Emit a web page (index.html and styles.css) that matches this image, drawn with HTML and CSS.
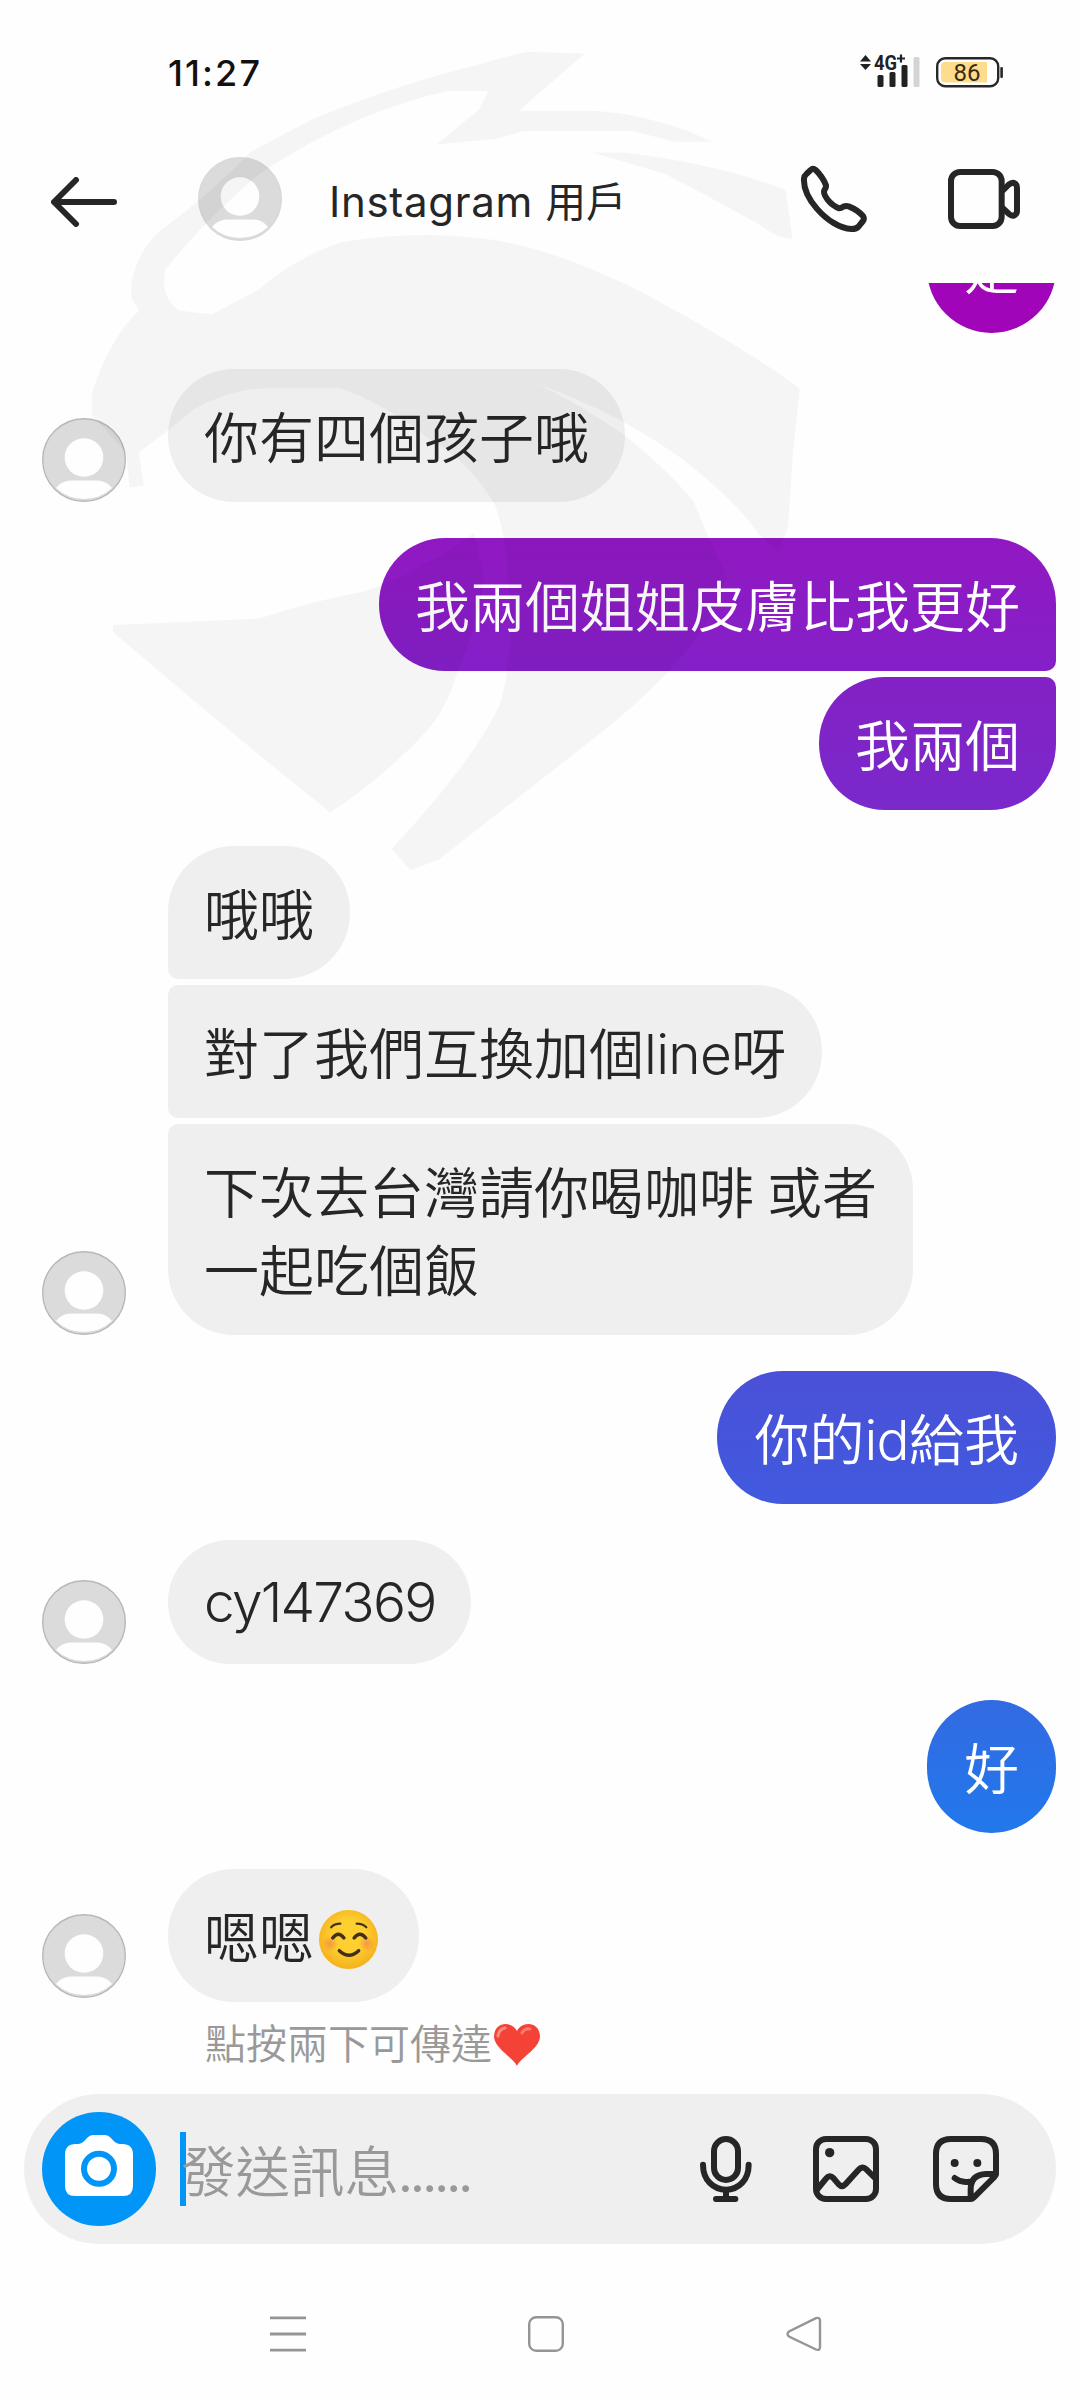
FILE: index.html
```html
<!DOCTYPE html>
<html lang="zh-Hant">
<head>
<meta charset="utf-8">
<title>Instagram 用戶</title>
<link rel="stylesheet" href="styles.css">
</head>
<body>
<svg class="defs" aria-hidden="true">
  <symbol id="avatar" viewBox="0 0 84 84">
    <circle cx="42" cy="42" r="41.5" fill="#dbdbdb"/>
    <circle cx="42" cy="39.5" r="19.3" fill="#fefefe"/>
    <path d="M14 70 Q20 62.500 29 62.500 H55 Q64 62.500 70 70 A41 41 0 0 1 14 70Z" fill="#fefefe"/>
    <circle cx="42" cy="42" r="41.3" fill="none" stroke="currentColor" stroke-width="1.400"/>
  </symbol>
</svg>
<div class="screen">
  <div class="status">
    <span class="time">11:27</span>
    <div class="indicators">
      <svg class="signal" viewBox="0 -6 62 40">
        <path d="M0 7.500 L5.500 1 L11 7.500Z M0 10 H11 L5.500 16Z" fill="#222"/>
        <text x="14" y="16" textLength="23" lengthAdjust="spacingAndGlyphs" class="net">4G</text>
        <path d="M37 4.500 H45 M41 .5 V8.500" stroke="#222" stroke-width="2.200"/>
        <rect x="17.500" y="21" width="6" height="12" rx="1.500" fill="#222"/>
        <rect x="29.500" y="18" width="6" height="15" rx="1.500" fill="#222"/>
        <rect x="41.500" y="11" width="6" height="22" rx="1.500" fill="#222"/>
        <rect x="53.500" y="3" width="6" height="30" rx="1.500" fill="#d4d4d4"/>
      </svg>
      <svg class="battery" viewBox="0 0 68 31">
        <rect x="1.200" y="1.200" width="61" height="28" rx="8" fill="#fff" stroke="#27272c" stroke-width="2.400"/>
        <path d="M9 5 H51 V25.500 H9 Q5 25.500 5 21.500 V9 Q5 5 9 5Z" fill="#fddc8b"/>
        <rect x="64.300" y="10" width="2.600" height="11" rx="1" fill="#27272c"/>
        <text x="17.500" y="24" textLength="27" lengthAdjust="spacingAndGlyphs" class="pct">86</text>
      </svg>
    </div>
  </div>

  <header class="header">
    <svg class="back" viewBox="0 0 66 50" fill="none" stroke="#262626" stroke-width="6" stroke-linecap="round" stroke-linejoin="round"><path d="M25 3 L3 25 L25 47 M4 25 H63"/></svg>
    <svg class="avatar avatar-top"><use href="#avatar"/></svg>
    <h1 class="title">Instagram <span class="title-cjk">用戶</span></h1>
    <svg class="phone" viewBox="60 75 204 204" fill="none" stroke="#262626" stroke-width="18" stroke-linejoin="round"><path d="M92 90 Q99 83 107 90 Q128 110 138 136 Q139 142 133 151 Q129 160 142 178 Q158 198 178 205 Q183 205 190 200 Q198 197 206 199 Q232 209 249 228 Q254 235 249 243 L236 259 Q230 267 214 267 C180 266 140 240 110 205 C85 176 70 145 72 115 Q73 107 80 101Z"/></svg>
    <svg class="video" viewBox="504 86 216 180" fill="none" stroke="#262626" stroke-width="18"><rect x="513" y="95" width="152" height="162" rx="27"/><path d="M667 152 L686 133 Q697 124 706 130 Q711 134 711 142 V212 Q711 221 703 225 Q695 228 687 221 L667 202"/></svg>
  </header>

  <main class="thread">
    <div class="sent"><p class="bubble out o1">是</p></div>
    <div class="received">
      <svg class="avatar"><use href="#avatar"/></svg>
      <div class="stack"><p class="bubble">你有四個孩子哦</p></div>
    </div>
    <div class="sent">
      <p class="bubble out o2 joins-below">我兩個姐姐皮膚比我更好</p>
      <p class="bubble out o3 joins-above">我兩個</p>
    </div>
    <div class="received">
      <svg class="avatar"><use href="#avatar"/></svg>
      <div class="stack">
        <p class="bubble joins-below">哦哦</p>
        <p class="bubble joins-below joins-above">對了我們互換加個<span class="latin">line</span>呀</p>
        <p class="bubble joins-above">下次去台灣請你喝咖啡<span class="gap"> </span>或者<br>一起吃個飯</p>
      </div>
    </div>
    <div class="sent"><p class="bubble out o4">你的<span class="latin">id</span>給我</p></div>
    <div class="received">
      <svg class="avatar"><use href="#avatar"/></svg>
      <div class="stack"><p class="bubble latin latin-only">cy147369</p></div>
    </div>
    <div class="sent"><p class="bubble out o5">好</p></div>
    <div class="received last">
      <svg class="avatar"><use href="#avatar"/></svg>
      <div class="stack">
        <p class="bubble with-emoji">嗯嗯<svg class="smile" viewBox="0 0 58 58">
          <defs>
            <radialGradient id="face" cx=".5" cy=".45" r=".55"><stop offset=".5" stop-color="#fdd030"/><stop offset="1" stop-color="#f5b01c"/></radialGradient>
            <radialGradient id="blush"><stop offset="0" stop-color="#f28a4a" stop-opacity=".8"/><stop offset="1" stop-color="#f28a4a" stop-opacity="0"/></radialGradient>
          </defs>
          <circle cx="29" cy="29" r="29" fill="url(#face)"/>
          <circle cx="11" cy="33" r="8" fill="url(#blush)"/><circle cx="47" cy="33" r="8" fill="url(#blush)"/>
          <g fill="none" stroke="#43301c" stroke-linecap="round">
            <path d="M12 17 Q15 13.500 21 13.500 M37 13.500 Q43 13.500 46.500 17" stroke-width="2.200"/>
            <path d="M13.500 27.500 Q19 20 24.500 27.500 M34.500 27.500 Q40 20 46 27.500" stroke-width="3.400"/>
            <path d="M20 40 Q29.500 49 39 40" stroke-width="3.400"/>
          </g></svg></p>
      </div>
    </div>
    <p class="hint">點按兩下可傳達<svg class="heart" viewBox="0 0 46 42"><path d="M23 42 C20 34 1 25 0 13 C0 5 5 0 11.500 0 C17 0 21 3 23 7 C25 3 29 0 34.500 0 C41 0 46 5 46 13 C45 25 26 34 23 42Z" fill="#f44336"/><path d="M4 12 Q5 5 11 4" fill="none" stroke="#ff8a80" stroke-width="3" stroke-linecap="round"/><path d="M28 9 Q31 4 36 5" fill="none" stroke="#ff7a70" stroke-width="3" stroke-linecap="round"/></svg></p>
  </main>

  <footer class="composer">
    <svg class="camera" viewBox="126 96 342 342">
      <circle cx="297" cy="267" r="171" fill="#0095f6"/>
      <path d="M227 192 H236 Q246 191 252 184 L262 173 Q269 165 279 165 H315 Q325 165 332 173 L342 184 Q348 191 358 192 H367 Q399 192 399 224 V318 Q399 348 369 348 H225 Q195 348 195 318 V224 Q195 192 227 192Z" fill="#fff"/>
      <circle cx="297" cy="266" r="45" fill="#fff" stroke="#0095f6" stroke-width="18"/>
    </svg>
    <div class="field"><span class="caret"></span><span class="placeholder">發送訊息<span class="dots">......</span></span></div>
    <div class="tools">
      <svg class="mic" viewBox="150 168 156 198" fill="none" stroke="#262626" stroke-width="18" stroke-linecap="round"><rect x="192" y="177" width="72" height="123" rx="36"/><path d="M159 254 C159 300 190 329 228 329 S296 300 296 254 M228 331 V355 M198 357 H256"/></svg>
      <svg class="tool" viewBox="489 168 198 198" fill="none" stroke="#262626" stroke-width="18"><rect x="498" y="177" width="180" height="180" rx="30"/><circle cx="539" cy="218" r="14" fill="#262626" stroke="none"/><path d="M500 330 L528 296 Q539 282 550 294 L566 313 Q576 323 586 313 L625 270 Q637 256 649 268 L680 299"/></svg>
      <svg class="tool" viewBox="849 168 198 198" fill="none" stroke="#262626" stroke-width="18" stroke-linecap="round" stroke-linejoin="round"><path d="M1038 282 V222 Q1038 177 993 177 H903 Q858 177 858 222 V312 Q858 357 903 357 H962 Q967 357 971 353 L1034 290 Q1038 286 1038 282 H1008 Q962 284 962 328 V354"/><path d="M914 294 Q933 309 957 305"/><circle cx="914" cy="249" r="12" fill="#262626" stroke="none"/><circle cx="982" cy="249" r="12" fill="#262626" stroke="none"/></svg>
    </div>
  </footer>

  <nav class="nav">
    <svg viewBox="0 0 36 36" fill="none" stroke="#959595" stroke-width="2.800"><path d="M0 1.800 H36 M0 18 H36 M0 34.200 H36"/></svg>
    <svg viewBox="0 0 36 36" fill="none" stroke="#959595" stroke-width="2.400"><rect x="1.200" y="1.200" width="33.600" height="33.600" rx="7"/></svg>
    <svg viewBox="0 0 36 36" fill="none" stroke="#959595" stroke-width="2.400"><path d="M30 2.200 L3 15.500 Q0 18 3 20.500 L30 33.500 Q34 35 34 31 V5 Q34 1 30 2.200Z"/></svg>
  </nav>

  <svg class="watermark" viewBox="0 0 1568 1568" preserveAspectRatio="none" aria-hidden="true">
    <path d="M1070 25 L950 22 Q900 30 850 45 Q700 75 500 145 Q430 175 360 210 Q260 300 170 355 Q105 410 108 480 L125 505 Q60 560 25 660 V700 L97 770 L105 835 L135 832 L125 770 Q200 720 240 690 Q320 650 400 650 H550 Q650 680 740 745 Q830 790 880 870 Q905 930 905 1000 Q925 1130 890 1240 Q830 1350 660 1510 L700 1550 L760 1530 Q950 1400 1130 1275 Q1230 1200 1260 1165 Q1340 1090 1370 1000 Q1330 930 1300 860 Q1230 790 1150 735 Q1060 680 970 642 Q1150 700 1280 785 Q1390 860 1440 925 L1480 955 L1500 910 L1510 780 L1525 650 Q1400 570 1200 475 Q1000 385 850 370 Q700 355 550 378 Q450 410 380 465 L280 512 L210 505 Q170 480 180 430 Q260 340 380 250 Q480 190 600 145 Q700 110 780 95 H865 L845 130 L755 195 L880 185 L940 170 H1170 L1260 190 H1337 L1290 170 Q1160 130 1060 132 H930Z"/>
    <path d="M1085 210 H1150 Q1350 230 1495 280 L1510 372 Q1480 372 1440 345 Q1350 300 1240 250Z"/>
    <path d="M70 1105 V1092 L380 1080 Q500 1045 600 1030 Q720 995 835 920 L855 1000 Q855 1060 800 1180 Q780 1240 740 1285 Q640 1380 530 1442 Q300 1280 70 1105Z"/>
  </svg>
</div>
</body>
</html>
```
FILE: styles.css
```css
* { box-sizing: border-box; }
body { margin: 0; background: #fefefe; }
p, h1 { margin: 0; }
svg { display: block; flex: none; }
.defs { position: absolute; width: 0; height: 0; }

.screen {
  position: relative;
  display: flex;
  flex-direction: column;
  width: 1080px;
  height: 2400px;
  overflow: hidden;
  background: #fefefe;
  color: #262626;
  font-family: Lato, "Noto Sans CJK TC", sans-serif;
}

/* status bar */
.status {
  display: flex;
  justify-content: space-between;
  height: 120px;
  padding: 54px 76px 0 168px;
}
.time {
  font: 500 36px/38px Inter, sans-serif;
  color: #111;
  letter-spacing: 2.1px;
}
.indicators { display: flex; gap: 14px; }
.signal { width: 62px; height: 40px; margin-top: -6px; }
.battery { width: 68px; height: 31px; margin-top: 3px; }
.net { font: 700 20px Roboto, sans-serif; fill: #222; }
.pct { font: 400 24px Roboto, sans-serif; fill: #3a2a12; }

/* conversation header */
.header {
  display: flex;
  align-items: center;
  height: 163px;
  padding: 0 60px 6px 51px;
}
.back { width: 66px; height: 50px; margin-top: 6px; }
.avatar { width: 84px; height: 84px; color: #b8b8b8; }
.avatar-top { margin-left: 81px; color: #d8d8d8; }
.title {
  flex: 1;
  margin: 7px 0 0 47px;
  font-family: Inter, "Noto Sans CJK TC", sans-serif;
  font-size: 42px;
  font-weight: 400;
  line-height: 60px;
  letter-spacing: .7px;
  white-space: nowrap;
}
.title-cjk { font-size: 40.5px; letter-spacing: 0; }
.phone { width: 68px; height: 68px; }
.video { width: 72px; height: 60px; margin-left: 80px; }

/* messages */
.thread {
  display: flex;
  flex-direction: column;
  gap: 36px;
  height: 1811px;
  overflow: hidden;
  padding-right: 24px;
}
.thread > :first-child { margin-top: -83px; }
.sent { display: flex; flex-direction: column; align-items: flex-end; gap: 6px; }
.received { display: flex; align-items: flex-end; gap: 42px; padding-left: 42px; }
.last .avatar { margin-bottom: 4px; }
.stack { display: flex; flex-direction: column; align-items: flex-start; gap: 6px; }
.bubble {
  padding: 29px 36px 26px;
  border-radius: 66px;
  background: #efefef;
  font-size: 55px;
  font-weight: 350;
  line-height: 78px;
  white-space: nowrap;
}
.stack .joins-below { border-bottom-left-radius: 10px; }
.stack .joins-above { border-top-left-radius: 10px; }
.sent .joins-below { border-bottom-right-radius: 10px; }
.sent .joins-above { border-top-right-radius: 10px; }
.out { padding-inline: 37px; color: #fff; }
.o1 { background: #a005b9; }
.o2 { padding-inline: 36px; background: linear-gradient(#9118c2, #8420c8); }
.o3 { padding-inline: 36px; background: linear-gradient(#8321c5, #7a29cb); }
.o4 { background: linear-gradient(#4b50d7, #405adf); }
.o5 { background: linear-gradient(#336ae2, #2178ec); }
.latin { font-family: Inter, sans-serif; font-weight: 300; line-height: 1; letter-spacing: -.7px; }
.latin-only { padding-block: 27px; line-height: 70px; letter-spacing: -1.8px; }
.gap { letter-spacing: -2px; }
.with-emoji { display: flex; padding-right: 41px; }
.smile { width: 59px; height: 59px; margin: 12px 0 0 5px; }
.hint {
  display: flex;
  margin-top: -24px;
  padding-left: 205px;
  font-size: 41px;
  font-weight: 350;
  line-height: 60px;
  color: #999;
}
.heart { width: 46px; height: 42px; margin: 10px 0 0 2px; }

/* composer */
.composer {
  display: flex;
  align-items: center;
  height: 150px;
  margin: 0 24px;
  padding: 0 57px 0 18px;
  border-radius: 75px;
  background: #efefef;
}
.camera { width: 114px; height: 114px; }
.field { display: flex; align-items: center; flex: 1; margin-left: 24px; }
.caret { width: 6px; height: 74px; margin-right: -5px; background: #0095f6; }
.placeholder { padding-top: 4px; font-size: 54.5px; font-weight: 350; line-height: 78px; color: #999; }
.dots { font-weight: 400; letter-spacing: -.8px; }
.tools { display: flex; }
.mic { width: 52px; height: 66px; margin-right: 61px; }
.tool { width: 66px; height: 66px; }
.tool + .tool { margin-left: 54px; }

/* system navigation */
.nav {
  display: flex;
  justify-content: space-between;
  margin-top: 72px;
  padding: 0 258px 0 270px;
}
.nav svg { width: 36px; height: 36px; }

.watermark {
  position: absolute;
  left: 80px;
  top: 40px;
  width: 740px;
  height: 840px;
  fill: rgba(0, 0, 0, .036);
}
```
